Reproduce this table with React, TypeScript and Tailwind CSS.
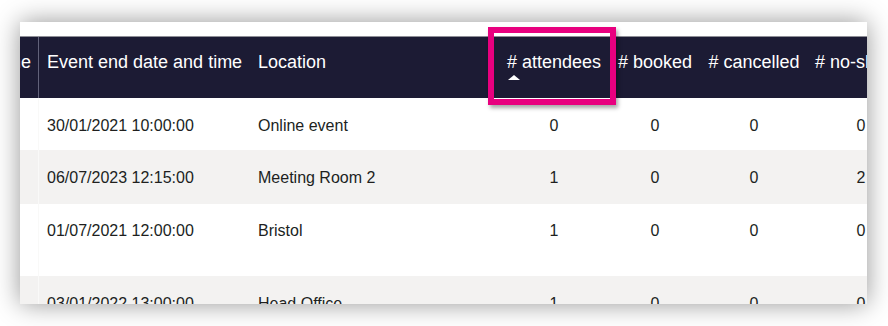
import React from "react";

const rows = [
  { end: "30/01/2021 10:00:00", loc: "Online event", a: "0", b: "0", c: "0", n: "0", h: "h-[52px]", p: "pt-[16px]", bg: "bg-white" },
  { end: "06/07/2023 12:15:00", loc: "Meeting Room 2", a: "1", b: "0", c: "0", n: "2", h: "h-[54px]", p: "pt-[16px]", bg: "bg-[#f3f2f1]" },
  { end: "01/07/2021 12:00:00", loc: "Bristol", a: "1", b: "0", c: "0", n: "0", h: "h-[72px]", p: "pt-[15px]", bg: "bg-white" },
  { end: "03/01/2022 13:00:00", loc: "Head Office", a: "1", b: "0", c: "0", n: "0", h: "h-[52px]", p: "pt-[16px]", bg: "bg-[#f3f2f1]" },
];

export default function App() {
  return (
    <div
      className="relative w-[888px] h-[326px] overflow-hidden bg-white pt-[22px] pl-[20px]"
      style={{ fontFamily: '"Liberation Sans", Arial, sans-serif' }}
    >
      <div className="w-[847px] h-[282px] bg-white overflow-hidden pt-[14px] shadow-[0_0_24px_rgba(0,0,0,0.42)]">
        {/* header */}
        <div className="flex h-[62px] bg-[#1c1b34] border-t border-[#8e8e96] text-white text-[18px] leading-[24px] whitespace-nowrap">
          <div className="w-[19px] shrink-0 border-r border-[#62627a] flex justify-end overflow-hidden pr-[7px] pt-[13px]">
            <span className="shrink-0">Event start date and time</span>
          </div>
          <div className="w-[211px] shrink-0 pl-[8px] pt-[13px]">Event end date and time</div>
          <div className="w-[248px] shrink-0 pl-[8px] pt-[13px]">Location</div>
          <div className="w-[112px] shrink-0 pt-[13px] text-center">
            <div className="inline-block text-left">
              <div>&#35; attendees</div>
              <div className="ml-[1px] mt-[1px] w-0 h-0 border-l-[6px] border-r-[6px] border-b-[5px] border-l-transparent border-r-transparent border-b-white" />
            </div>
          </div>
          <div className="w-[90px] shrink-0 pt-[13px] text-center">&#35; booked</div>
          <div className="w-[108px] shrink-0 pt-[13px] text-center">&#35; cancelled</div>
          <div className="w-[106px] shrink-0 pt-[13px] text-center">&#35; no-shows</div>
        </div>
        {/* body */}
        {rows.map((r, i) => (
          <div key={i} className={`flex ${r.h} ${r.bg} text-[16px] leading-[24px] text-[#201f1e] whitespace-nowrap`}>
            <div className="w-[19px] shrink-0 border-r border-[#f9f9f8]" />
            <div className={`w-[211px] shrink-0 pl-[8px] ${r.p}`}>{r.end}</div>
            <div className={`w-[248px] shrink-0 pl-[8px] ${r.p}`}>{r.loc}</div>
            <div className={`w-[112px] shrink-0 text-center ${r.p}`}>{r.a}</div>
            <div className={`w-[90px] shrink-0 text-center ${r.p}`}>{r.b}</div>
            <div className={`w-[108px] shrink-0 text-center ${r.p}`}>{r.c}</div>
            <div className={`w-[106px] shrink-0 text-center ${r.p}`}>{r.n}</div>
          </div>
        ))}
      </div>
      {/* highlight box */}
      <div className="absolute left-[488px] top-[27px] w-[128px] h-[78px] border-[6px] border-[#e8007f] shadow-[2px_3px_4px_rgba(0,0,0,0.35)]" />
    </div>
  );
}
